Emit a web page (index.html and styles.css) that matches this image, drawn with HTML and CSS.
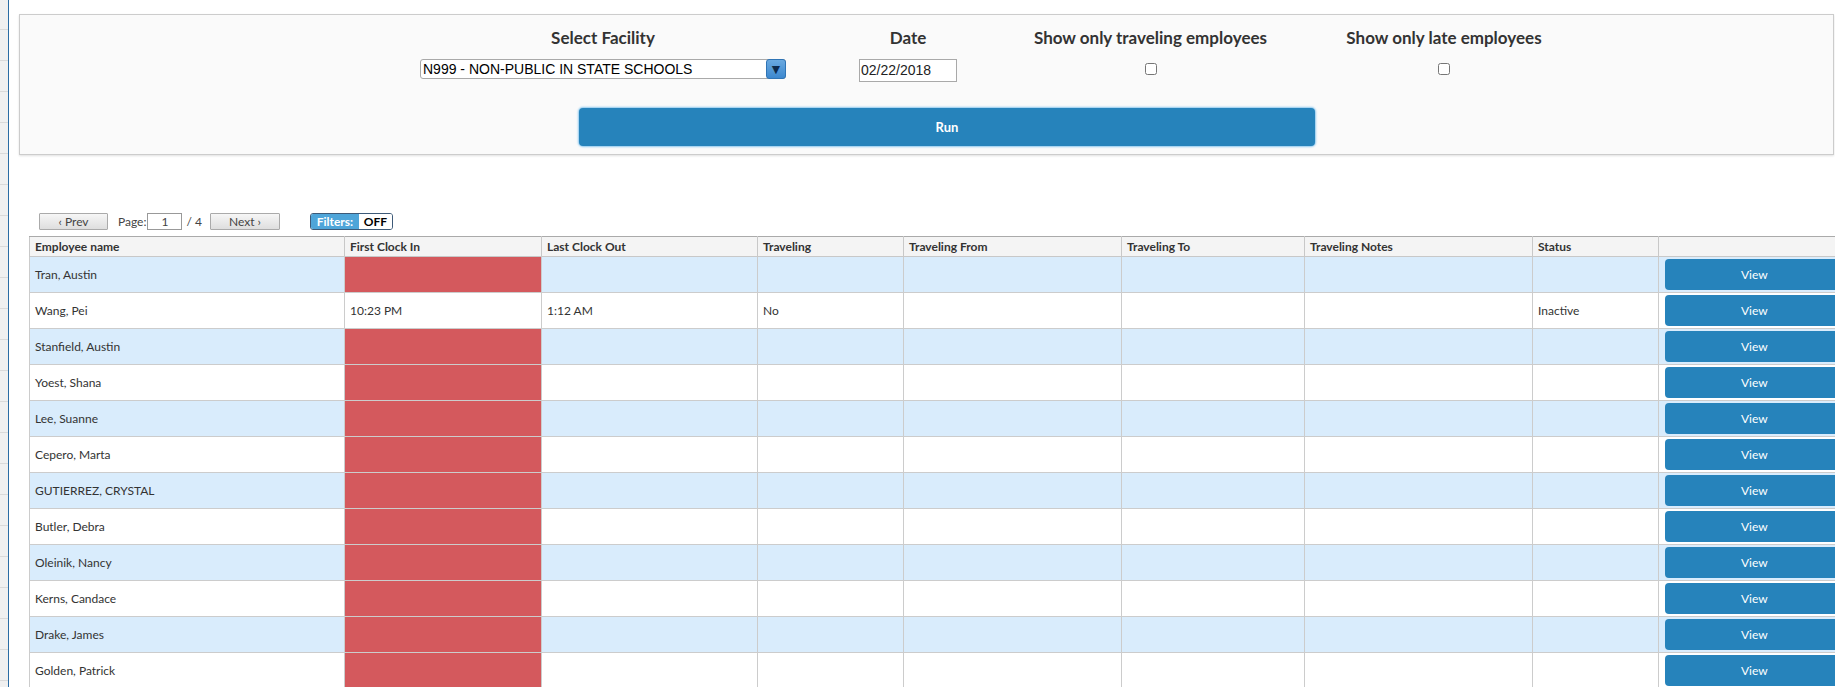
FILE: index.html
```html
<!DOCTYPE html>
<html>
<head>
<meta charset="utf-8">
<link rel="stylesheet" href="styles.css">
</head>
<body>
<div class="layout">
  <div class="sidebar"></div>
  <div class="main">
    <div class="panel">
      <div class="filters">
        <div class="fcol fcol-facility">
          <div class="fhead">Select Facility</div>
          <div class="fselect">
            <span class="fselect-text">N999 - NON-PUBLIC IN STATE SCHOOLS</span>
            <span class="fselect-arrow">▼</span>
          </div>
        </div>
        <div class="fcol fcol-date">
          <div class="fhead">Date</div>
          <div class="fdate">02/22/2018</div>
        </div>
        <div class="fcol fcol-trav">
          <div class="fhead">Show only traveling employees</div>
          <input type="checkbox" class="fcheck">
        </div>
        <div class="fcol fcol-late">
          <div class="fhead">Show only late employees</div>
          <input type="checkbox" class="fcheck">
        </div>
      </div>
      <div class="run-row">
        <button class="run-btn">Run</button>
      </div>
    </div>

    <div class="pager">
      <button class="pbtn pbtn-prev">‹ Prev</button>
      <span class="plabel">Page:</span>
      <span class="pinput">1</span>
      <span class="ptotal">/ 4</span>
      <button class="pbtn pbtn-next">Next ›</button>
      <span class="ftoggle"><span class="ftoggle-l">Filters:</span><span class="ftoggle-r">OFF</span></span>
    </div>

    <table class="grid">
      <colgroup>
        <col class="c1"><col class="c2"><col class="c3"><col class="c4"><col class="c5"><col class="c6"><col class="c7"><col class="c8"><col class="c9">
      </colgroup>
      <thead>
        <tr>
          <th>Employee name</th>
          <th>First Clock In</th>
          <th>Last Clock Out</th>
          <th>Traveling</th>
          <th>Traveling From</th>
          <th>Traveling To</th>
          <th>Traveling Notes</th>
          <th>Status</th>
          <th></th>
        </tr>
      </thead>
      <tbody>
        <tr class="alt"><td>Tran, Austin</td><td class="late"></td><td></td><td></td><td></td><td></td><td></td><td></td><td class="act"><button class="view-btn">View</button></td></tr>
        <tr><td>Wang, Pei</td><td>10:23 PM</td><td>1:12 AM</td><td>No</td><td></td><td></td><td></td><td>Inactive</td><td class="act"><button class="view-btn">View</button></td></tr>
        <tr class="alt"><td>Stanfield, Austin</td><td class="late"></td><td></td><td></td><td></td><td></td><td></td><td></td><td class="act"><button class="view-btn">View</button></td></tr>
        <tr><td>Yoest, Shana</td><td class="late"></td><td></td><td></td><td></td><td></td><td></td><td></td><td class="act"><button class="view-btn">View</button></td></tr>
        <tr class="alt"><td>Lee, Suanne</td><td class="late"></td><td></td><td></td><td></td><td></td><td></td><td></td><td class="act"><button class="view-btn">View</button></td></tr>
        <tr><td>Cepero, Marta</td><td class="late"></td><td></td><td></td><td></td><td></td><td></td><td></td><td class="act"><button class="view-btn">View</button></td></tr>
        <tr class="alt"><td>GUTIERREZ, CRYSTAL</td><td class="late"></td><td></td><td></td><td></td><td></td><td></td><td></td><td class="act"><button class="view-btn">View</button></td></tr>
        <tr><td>Butler, Debra</td><td class="late"></td><td></td><td></td><td></td><td></td><td></td><td></td><td class="act"><button class="view-btn">View</button></td></tr>
        <tr class="alt"><td>Oleinik, Nancy</td><td class="late"></td><td></td><td></td><td></td><td></td><td></td><td></td><td class="act"><button class="view-btn">View</button></td></tr>
        <tr><td>Kerns, Candace</td><td class="late"></td><td></td><td></td><td></td><td></td><td></td><td></td><td class="act"><button class="view-btn">View</button></td></tr>
        <tr class="alt"><td>Drake, James</td><td class="late"></td><td></td><td></td><td></td><td></td><td></td><td></td><td class="act"><button class="view-btn">View</button></td></tr>
        <tr><td>Golden, Patrick</td><td class="late"></td><td></td><td></td><td></td><td></td><td></td><td></td><td class="act"><button class="view-btn">View</button></td></tr>
      </tbody>
    </table>
  </div>
</div>
</body>
</html>
```

FILE: styles.css
```css
html, body {
  margin: 0;
  padding: 0;
  background: #ffffff;
  overflow: hidden;
  height: 687px;
}
body {
  font-family: Lato, "Open Sans", sans-serif;
  color: #333333;
}
.layout {
  display: flex;
  height: 687px;
}
.sidebar {
  width: 8px;
  flex: 0 0 8px;
  background: repeating-linear-gradient(to bottom, #f0f0f0 0, #f0f0f0 30px, #dadada 30px, #dadada 31px);
  background-position: 0 -1px;
  border-right: 1px solid #2b6ca3;
}
.main {
  flex: 1;
  min-width: 0;
}

/* filter panel */
.panel {
  margin: 14px 1px 0 10px;
  background: #fafafa;
  border: 1px solid #cccccc;
  box-shadow: 0 1px 2px rgba(0,0,0,0.12);
  padding: 12px 0 8px 0;
}
.filters {
  display: flex;
  gap: 73px;
  padding-left: 400px;
}
.fcol {
  display: flex;
  flex-direction: column;
  align-items: center;
}
.fcol-facility { width: 366px; }
.fcol-date { width: 98px; }
.fcol-trav { width: 241px; }
.fcol-late { width: 200px; }
.fhead {
  font-size: 17px;
  font-weight: bold;
  line-height: 21px;
  white-space: nowrap;
  color: #333;
}
.fselect {
  margin-top: 11px;
  width: 366px;
  height: 20px;
  box-sizing: border-box;
  border: 1px solid #a9a9a9;
  border-radius: 3px;
  background: #fff;
  display: flex;
  align-items: center;
  font-family: "Liberation Sans", Arial, sans-serif;
  font-size: 14px;
  color: #000;
}
.fselect-text {
  flex: 1;
  padding-left: 2px;
  white-space: nowrap;
}
.fselect-arrow {
  width: 20px;
  height: 20px;
  margin: -1px -1px -1px 0;
  box-sizing: border-box;
  border: 1px solid #2f74b5;
  border-radius: 3px;
  background: linear-gradient(to bottom, #6aa9e0, #3d88cf);
  color: #0d2a4d;
  font-size: 14px;
  line-height: 14px;
  display: flex;
  align-items: center;
  justify-content: center;
}
.fdate {
  margin-top: 11px;
  width: 98px;
  height: 23px;
  box-sizing: border-box;
  border: 1px solid #a9a9a9;
  background: #fff;
  font-family: "Liberation Sans", Arial, sans-serif;
  font-size: 14px;
  line-height: 21px;
  padding-left: 1px;
  color: #222;
}
.fcheck {
  margin: 15px 0 0 0;
  width: 12px;
  height: 12px;
}
.run-row {
  padding-left: 559px;
  margin-top: 26px;
}
.run-btn {
  width: 736px;
  height: 38px;
  border: none;
  border-radius: 4px;
  background: #2683bb;
  box-shadow: 0 0 2px 1px #8cc8ef;
  color: #fff;
  font-family: Lato, sans-serif;
  font-weight: bold;
  font-size: 13px;
  display: block;
}

/* pager */
.pager {
  display: flex;
  align-items: center;
  margin: 57px 0 0 30px;
  height: 18px;
  font-size: 12px;
  color: #444;
}
.pbtn {
  height: 17px;
  box-sizing: border-box;
  border: 1px solid #aaaaaa;
  border-radius: 1px;
  background: linear-gradient(to bottom, #f6f6f6, #dedede);
  font-family: Lato, sans-serif;
  font-size: 12px;
  line-height: 15px;
  color: #444;
  padding: 0;
}
.pbtn-prev { width: 69px; }
.pbtn-next { width: 70px; margin-left: 8px; }
.plabel { margin-left: 10px; }
.pinput {
  margin-left: 1px;
  width: 35px;
  height: 17px;
  box-sizing: border-box;
  border: 1px solid #999;
  background: #fff;
  text-align: center;
  line-height: 15px;
}
.ptotal { margin-left: 4px; }
.ftoggle {
  margin-left: 30px;
  display: flex;
  height: 17px;
  box-sizing: border-box;
  border: 1px solid #3d5a78;
  border-radius: 3px;
  overflow: hidden;
  font-weight: bold;
  font-size: 12px;
}
.ftoggle-l {
  background: #4ea5d9;
  color: #fff;
  width: 48px;
  text-align: center;
  line-height: 15px;
}
.ftoggle-r {
  background: #fff;
  color: #000;
  width: 33px;
  text-align: center;
  line-height: 15px;
}

/* grid */
.grid {
  margin: 6px 0 0 20px;
  border-collapse: collapse;
  table-layout: fixed;
  width: 1832px;
  font-size: 12px;
  color: #333;
}
.c1 { width: 315px; }
.c2 { width: 197px; }
.c3 { width: 216px; }
.c4 { width: 146px; }
.c5 { width: 218px; }
.c6 { width: 183px; }
.c7 { width: 228px; }
.c8 { width: 126px; }
.c9 { width: 203px; }
.grid th {
  background: #f4f4f4;
  border: 1px solid #c8c8c8;
  border-top-color: #aaaaaa;
  text-align: left;
  font-weight: bold;
  font-size: 12px;
  height: 19px;
  line-height: 14px;
  padding: 0 5px;
  white-space: nowrap;
}
.grid td {
  border: 1px solid #cccccc;
  height: 36px;
  line-height: 14px;
  padding: 0 5px;
  white-space: nowrap;
  overflow: hidden;
  box-sizing: border-box;
}
.grid tr.alt td { background: #d9ecfc; }
.grid td.late,
.grid tr.alt td.late { background: #d4595d; }
.grid td.act {
  padding: 0;
  vertical-align: top;
}
.view-btn {
  display: block;
  width: 200px;
  height: 31px;
  margin: 2px 0 0 6px;
  border: none;
  border-radius: 4px;
  background: #2683bb;
  color: #fff;
  font-family: Lato, sans-serif;
  font-size: 12px;
  padding: 0;
  text-align: left;
  text-indent: 76px;
}
```
